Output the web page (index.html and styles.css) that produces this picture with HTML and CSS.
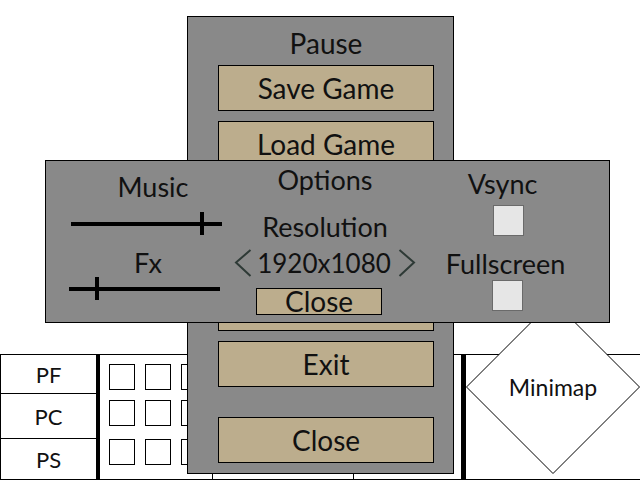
FILE: index.html
```html
<!DOCTYPE html>
<html lang="en">
<head>
  <meta charset="UTF-8" />
  <meta name="viewport" content="width=device-width, initial-scale=1" />
  <title>Game UI</title>

  <link rel="stylesheet" href="styles.css">
</head>
<body>
  <div class="screen">
    <div class="world"></div>

    <!-- bottom HUD -->
    <footer class="hud">
      <div class="stats">
        <div class="stat">PF</div>
        <div class="stat">PC</div>
        <div class="stat">PS</div>
      </div>
      <div class="hud-bar"></div>
      <div class="inventory">
        <div class="slot"></div><div class="slot"></div><div class="slot"></div>
        <div class="slot"></div><div class="slot"></div><div class="slot"></div>
        <div class="slot"></div><div class="slot"></div><div class="slot"></div>
      </div>
      <div class="hud-cell quick"></div>
      <div class="hud-cell equip"></div>
      <div class="hud-bar wide"></div>
      <div class="minimap">
        <div class="minimap-shape">
          <svg width="174" height="174" viewBox="0 0 174 174">
            <polygon points="87,0.5 173.5,87 87,173.5 0.5,87" fill="#fff" stroke="#000" stroke-width="1" />
          </svg>
          <span class="minimap-label">Minimap</span>
        </div>
      </div>
    </footer>

    <!-- pause menu (middle buttons sit under the options dialog) -->
    <div class="pause">
      <h1 class="pause-title">Pause</h1>
      <button class="btn">Save Game</button>
      <button class="btn">Load Game</button>
      <button class="btn" aria-label="Options"></button>
      <button class="btn" aria-label="Controls"></button>
      <div class="menu-bottom">
        <button class="btn" aria-label="Main Menu"></button>
        <button class="btn">Exit</button>
        <button class="btn btn-close">Close</button>
      </div>
    </div>

    <!-- options dialog -->
    <div class="options">
      <div class="opt-col opt-left">
        <div class="label music-label">Music</div>
        <div class="slider music-slider"><div class="knob" style="left: 87%"></div></div>
        <div class="label fx-label">Fx</div>
        <div class="slider fx-slider"><div class="knob" style="left: 19%"></div></div>
      </div>
      <div class="opt-col opt-mid">
        <div class="label">Options</div>
        <div class="label res-label">Resolution</div>
        <div class="res">
          <svg class="chev" width="18" height="28" viewBox="0 0 18 28">
            <polyline points="16.5,1 2,13.5 16.5,27" fill="none" stroke="#2e3a36" stroke-width="2" />
          </svg>
          <span class="res-value">1920x1080</span>
          <svg class="chev" width="18" height="28" viewBox="0 0 18 28">
            <polyline points="1.5,1 16,13.5 1.5,27" fill="none" stroke="#2e3a36" stroke-width="2" />
          </svg>
        </div>
        <button class="small-btn">Close</button>
      </div>
      <div class="opt-col opt-right">
        <div class="label vsync-label">Vsync</div>
        <div class="check check-vsync"></div>
        <div class="label full-label">Fullscreen</div>
        <div class="check check-full"></div>
      </div>
    </div>
  </div>
</body>
</html>
```

FILE: styles.css
```css
*, *::before, *::after {
  box-sizing: border-box;
}

body {
  margin: 0;
  font-family: Lato, "Open Sans", sans-serif;
  color: #111;
  background: #fff;
  overflow: hidden;
}

.screen {
  position: relative;
  width: 640px;
  height: 480px;
  display: flex;
  flex-direction: column;
  overflow: hidden;
}

.world {
  flex: 1;
}

/* HUD */
.hud {
  height: 126px;
  display: flex;
  border-top: 1px solid #000;
  border-bottom: 1px solid #000;
}

.stats {
  width: 96px;
  border-left: 1px solid #000;
  display: grid;
  grid-template-rows: 39px 45px 1fr;
}

.stat {
  display: flex;
  align-items: center;
  justify-content: center;
  font-size: 22px;
  border-bottom: 1px solid #000;
}

.stat:last-child {
  border-bottom: 0;
}

.hud-bar {
  width: 4px;
  background: #000;
}

.hud-bar.wide {
  width: 5px;
}

.inventory {
  width: 112px;
  padding: 9px 0 0 9px;
  display: grid;
  grid-template-columns: repeat(3, 26px);
  grid-template-rows: 36px 39px 26px;
  column-gap: 10px;
  align-items: start;
}

.slot {
  width: 26px;
  height: 26px;
  border: 1px solid #000;
}

.hud-cell {
  border-left: 1px solid #000;
}

.quick { width: 141px; }
.equip { width: 108px; }

.minimap {
  flex: 1;
  position: relative;
}

.minimap-shape {
  position: absolute;
  left: 0;
  top: -55px;
  width: 174px;
  height: 174px;
  display: flex;
  align-items: center;
  justify-content: center;
}

.minimap-shape svg {
  position: absolute;
  left: 0;
  top: 0;
}

.minimap-label {
  position: relative;
  font-size: 23px;
}

/* pause menu */
.pause {
  position: absolute;
  left: 187px;
  top: 16px;
  width: 267px;
  height: 458px;
  background: #898989;
  border: 1px solid #000;
  padding: 9px 19px 10px 30px;
  display: flex;
  flex-direction: column;
}

.pause-title {
  margin: 0 0 5px;
  font-size: 28px;
  font-weight: normal;
  line-height: 34px;
  text-align: center;
}

.btn {
  display: block;
  width: 100%;
  height: 46px;
  padding: 0;
  border: 1px solid #000;
  background: #bcad8d;
  color: #111;
  font-family: inherit;
  font-size: 28px;
  line-height: 44px;
  text-align: center;
}

.btn + .btn {
  margin-top: 10px;
}

.menu-bottom {
  margin-top: auto;
  display: flex;
  flex-direction: column;
}

.btn.btn-close {
  margin-top: 30px;
}

/* options dialog */
.options {
  position: absolute;
  left: 45px;
  top: 160px;
  width: 565px;
  height: 163px;
  background: #898989;
  border: 1px solid #000;
  display: grid;
  grid-template-columns: 198px 162px 1fr;
}

.opt-col {
  display: flex;
  flex-direction: column;
  align-items: center;
}

.label {
  font-size: 27px;
  line-height: 28px;
}

.opt-left { padding-top: 12px; }
.music-label { margin-left: 16px; }
.fx-label { margin-top: 14px; margin-left: 6px; }

.slider {
  position: relative;
  width: 151px;
  height: 23px;
}

.slider::before {
  content: '';
  position: absolute;
  left: 0;
  right: 0;
  top: 10px;
  height: 4px;
  background: #000;
}

.music-slider { margin-top: 11px; margin-left: 2px; }
.fx-slider { margin-right: 2px; }

.knob {
  position: absolute;
  top: 0;
  width: 4px;
  height: 23px;
  background: #000;
  transform: translateX(-50%);
}

.opt-mid { padding-top: 5px; }
.res-label { margin-top: 19px; }

.res {
  margin-top: 6px;
  display: flex;
  align-items: center;
  gap: 5px;
}

.res-value {
  font-size: 26px;
  line-height: 32px;
  margin-right: 2px;
}

.small-btn {
  margin-top: 9px;
  margin-right: 12px;
  width: 126px;
  height: 27px;
  padding: 0;
  border: 1px solid #000;
  background: #bcad8d;
  color: #111;
  font-family: inherit;
  font-size: 28px;
  line-height: 25px;
}

.opt-right { padding-top: 9px; }
.vsync-label { margin-right: 10px; }
.full-label { margin-top: 14px; margin-right: 4px; }

.check {
  width: 31px;
  height: 31px;
  background: #e6e6e6;
  border: 1px solid #6a6a6a;
}

.check-vsync { margin-top: 7px; margin-left: 2px; }
.check-full { margin-top: 2px; }
```
